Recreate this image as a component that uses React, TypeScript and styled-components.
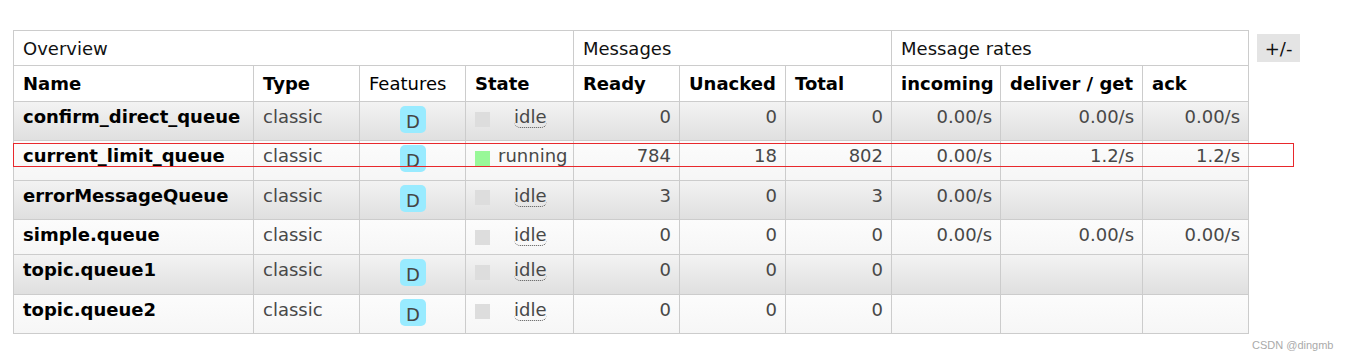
import React from "react";
import styled, { createGlobalStyle } from "styled-components";

const Global = createGlobalStyle`
  html, body { margin: 0; padding: 0; background: #fff; }
  body { font-family: "DejaVu Sans", Verdana, sans-serif; }
`;

const Page = styled.div`
  position: relative;
  width: 1348px;
  height: 361px;
  box-sizing: border-box;
  padding: 30px 0 0 13px;
  display: flex;
  align-items: flex-start;
  gap: 8px;
`;

const Table = styled.table`
  border-collapse: collapse;
  table-layout: fixed;
  width: 1235px;
  font-size: 18px;
  line-height: 22px;
  color: #484848;
`;

const HeadRow = styled.tr`
  background: #fff;
`;

const GroupTh = styled.th`
  border: 1px solid #ccc;
  text-align: left;
  font-weight: normal;
  color: #111;
  padding: 7px 9px 5px 9px;
  height: 22px;
`;

const ColTh = styled.th<{ $light?: boolean }>`
  border: 1px solid #ccc;
  text-align: left;
  font-weight: ${(p) => (p.$light ? "normal" : "bold")};
  color: #000;
  padding: 7px 8px 6px 9px;
  white-space: nowrap;
`;

const BodyRow = styled.tr<{ $alt: boolean; $tall: boolean }>`
  height: ${(p) => (p.$tall ? "39.4px" : "35px")};
  background: ${(p) =>
    p.$alt
      ? "linear-gradient(#f3f3f3, #dfdfdf)"
      : "linear-gradient(#fcfcfc, #f6f6f6)"};
`;

const Td = styled.td<{ $num?: boolean; $center?: boolean }>`
  border: 1px solid #ccc;
  vertical-align: top;
  padding: 4px 8px 8px 9px;
  text-align: ${(p) => (p.$num ? "right" : p.$center ? "center" : "left")};
  white-space: nowrap;
`;

const NameTd = styled(Td)`
  font-weight: bold;
  color: #000;
`;

const Badge = styled.span`
  display: inline-block;
  vertical-align: top;
  width: 26px;
  height: 27px;
  margin-bottom: -5px;
  border-radius: 5px;
  background: #99ebff;
  color: #444;
  text-align: center;
  line-height: 31px;
  font-size: 18px;
`;

const StateBox = styled.span`
  display: flex;
  align-items: center;
`;

const Square = styled.span<{ $on: boolean }>`
  display: inline-block;
  width: 15px;
  height: 15px;
  margin-top: 4px;
  background: ${(p) => (p.$on ? "#98f898" : "#dddddd")};
  flex: none;
`;

const StateText = styled.span<{ $idle: boolean }>`
  margin-left: ${(p) => (p.$idle ? "24px" : "8px")};
  ${(p) =>
    p.$idle
      ? `border-bottom: 1px dotted #555; border-radius: 0 0 6px 6px; line-height: 21px;`
      : ""}
`;

const ToggleButton = styled.button`
  margin-top: 4px;
  width: 43px;
  height: 28px;
  border: none;
  padding: 0;
  background: #e4e4e4;
  font-family: "DejaVu Sans", Verdana, sans-serif;
  font-size: 18px;
  color: #111;
`;

const Highlight = styled.div`
  position: absolute;
  left: 13px;
  top: 143px;
  width: 1279px;
  height: 22px;
  border: 1px solid #e8282c;
  pointer-events: none;
`;

const Watermark = styled.div`
  position: absolute;
  left: 1252px;
  top: 339px;
  font-family: "Liberation Sans", Arial, sans-serif;
  font-size: 11px;
  color: #aaa;
`;

type Row = {
  name: string;
  durable: boolean;
  running: boolean;
  ready: string;
  unacked: string;
  total: string;
  incoming: string;
  deliver: string;
  ack: string;
};

const rows: Row[] = [
  { name: "confirm_direct_queue", durable: true, running: false, ready: "0", unacked: "0", total: "0", incoming: "0.00/s", deliver: "0.00/s", ack: "0.00/s" },
  { name: "current_limit_queue", durable: true, running: true, ready: "784", unacked: "18", total: "802", incoming: "0.00/s", deliver: "1.2/s", ack: "1.2/s" },
  { name: "errorMessageQueue", durable: true, running: false, ready: "3", unacked: "0", total: "3", incoming: "0.00/s", deliver: "", ack: "" },
  { name: "simple.queue", durable: false, running: false, ready: "0", unacked: "0", total: "0", incoming: "0.00/s", deliver: "0.00/s", ack: "0.00/s" },
  { name: "topic.queue1", durable: true, running: false, ready: "0", unacked: "0", total: "0", incoming: "", deliver: "", ack: "" },
  { name: "topic.queue2", durable: true, running: false, ready: "0", unacked: "0", total: "0", incoming: "", deliver: "", ack: "" },
];

const widths = [240, 106, 106, 108, 106, 106, 106, 109, 142, 106];

export default function App() {
  return (
    <>
      <Global />
      <Page>
        <Table>
          <colgroup>
            {widths.map((w, i) => (
              <col key={i} style={{ width: w }} />
            ))}
          </colgroup>
          <thead>
            <HeadRow>
              <GroupTh colSpan={4}>Overview</GroupTh>
              <GroupTh colSpan={3}>Messages</GroupTh>
              <GroupTh colSpan={3}>Message rates</GroupTh>
            </HeadRow>
            <HeadRow>
              <ColTh>Name</ColTh>
              <ColTh>Type</ColTh>
              <ColTh $light>Features</ColTh>
              <ColTh>State</ColTh>
              <ColTh>Ready</ColTh>
              <ColTh>Unacked</ColTh>
              <ColTh>Total</ColTh>
              <ColTh>incoming</ColTh>
              <ColTh>deliver / get</ColTh>
              <ColTh>ack</ColTh>
            </HeadRow>
          </thead>
          <tbody>
            {rows.map((r, i) => (
              <BodyRow key={r.name} $alt={i % 2 === 0} $tall={r.durable}>
                <NameTd>{r.name}</NameTd>
                <Td>classic</Td>
                <Td $center>{r.durable ? <Badge>D</Badge> : null}</Td>
                <Td>
                  <StateBox>
                    <Square $on={r.running} />
                    <StateText $idle={!r.running}>{r.running ? "running" : "idle"}</StateText>
                  </StateBox>
                </Td>
                <Td $num>{r.ready}</Td>
                <Td $num>{r.unacked}</Td>
                <Td $num>{r.total}</Td>
                <Td $num>{r.incoming}</Td>
                <Td $num>{r.deliver}</Td>
                <Td $num>{r.ack}</Td>
              </BodyRow>
            ))}
          </tbody>
        </Table>
        <ToggleButton>+/-</ToggleButton>
        <Highlight />
        <Watermark>CSDN @dingmb</Watermark>
      </Page>
    </>
  );
}
